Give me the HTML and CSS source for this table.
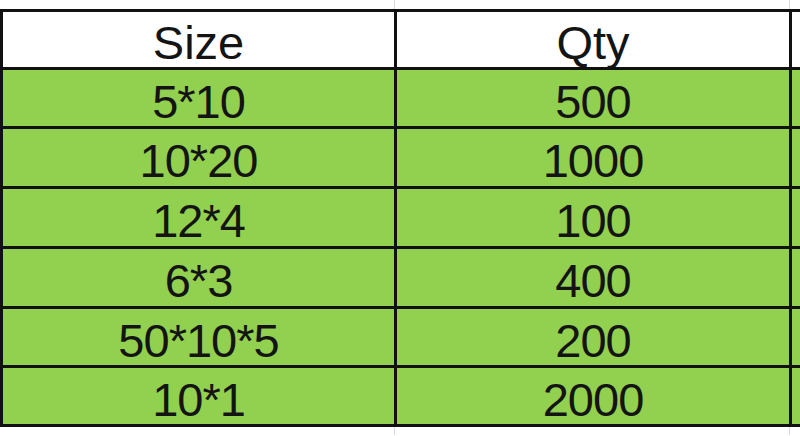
FILE: index.html
```html
<!DOCTYPE html>
<html>
<head>
<meta charset="utf-8">
<link rel="stylesheet" href="styles.css">
</head>
<body>
<div class="sheet">
  <div class="strip strip-top">
    <div class="ghost c1"></div><div class="ghost c2"></div><div class="ghost c3"></div>
  </div>
  <div class="grid">
    <div class="cell head">Size</div><div class="cell head">Qty</div><div class="cell head blank"></div>
    <div class="cell r1">5*10</div><div class="cell r1">500</div><div class="cell r1"></div>
    <div class="cell r2">10*20</div><div class="cell r2">1000</div><div class="cell r2"></div>
    <div class="cell r3">12*4</div><div class="cell r3">100</div><div class="cell r3"></div>
    <div class="cell r4">6*3</div><div class="cell r4">400</div><div class="cell r4"></div>
    <div class="cell r5">50*10*5</div><div class="cell r5">200</div><div class="cell r5"></div>
    <div class="cell r6">10*1</div><div class="cell r6">2000</div><div class="cell r6"></div>
  </div>
  <div class="strip strip-bottom">
    <div class="ghost c1"></div><div class="ghost c2"></div><div class="ghost c3"></div>
  </div>
</div>
</body>
</html>
```
FILE: styles.css
```css
* { box-sizing: border-box; }
html, body { margin: 0; padding: 0; background: #ffffff; }
body {
  width: 800px;
  height: 436px;
  overflow: hidden;
  font-family: "Liberation Sans", Arial, sans-serif;
}
.sheet {
  display: flex;
  flex-direction: column;
}
.strip {
  display: grid;
  grid-template-columns: 395px 395px 1fr;
}
.strip-top { height: 9px; }
.strip-bottom { height: 8px; }
.ghost {
  border-right: 1px solid #d9d9d9;
}
.ghost.c3 { border-right: none; }
.grid {
  display: grid;
  grid-template-columns: 391px 392px 1fr;
  grid-template-rows: 55px 56px 57px 57px 57px 56px 56px;
  gap: 3px;
  padding: 3px 0 3px 3px;
  background: #111111;
}
.cell {
  background: #92d050;
  color: #141414;
  font-size: 47px;
  display: flex;
  align-items: center;
  justify-content: center;
  padding-top: 6px;
  line-height: 1;
  white-space: nowrap;
  letter-spacing: -1px;
}
.cell.head { background: #ffffff; letter-spacing: 0; }
```
